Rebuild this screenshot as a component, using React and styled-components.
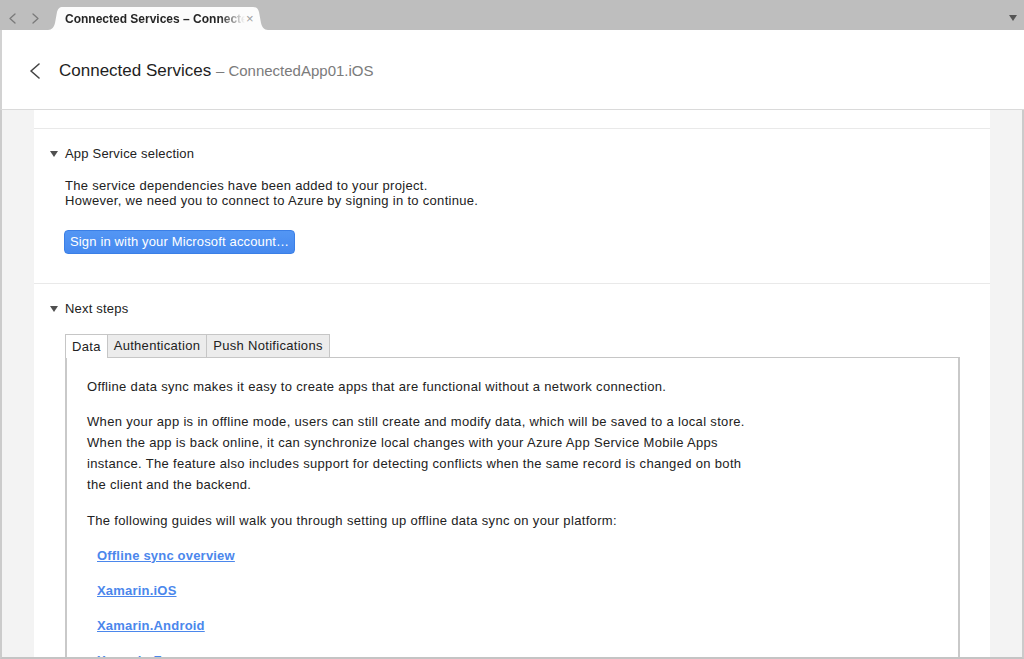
import React from 'react';
import styled, { createGlobalStyle } from 'styled-components';

const Global = createGlobalStyle`
  html, body {
    margin: 0;
    padding: 0;
    overflow: hidden;
    background: #fff;
  }
  body {
    font-family: "Liberation Sans", Arial, sans-serif;
    color: #222;
  }
`;

const Window = styled.div`
  width: 1024px;
  height: 659px;
  display: flex;
  flex-direction: column;
`;

const TabStrip = styled.div`
  height: 30px;
  flex: none;
  background: #bebebe;
  display: flex;
  align-items: flex-end;
  padding-left: 9px;
  position: relative;
`;

const NavArrows = styled.div`
  display: flex;
  gap: 16px;
  align-self: center;
  margin-top: 6px;
  color: #7a7a7a;
`;

const BrowserTab = styled.div`
  position: relative;
  width: 220px;
  height: 23px;
  margin-left: 9px;
  background: #fcfcfc;
  clip-path: path("M0 23 C4 23 6 20 7 16 L9 5 C10 2 11 0 15 0 L205 0 C209 0 210 2 211 5 L213 16 C214 20 216 23 220 23 Z");
  display: flex;
  align-items: center;
  padding-left: 17px;
  box-sizing: border-box;
`;

const TabLabel = styled.span`
  font-size: 12px;
  font-weight: bold;
  color: #262626;
  white-space: nowrap;
  overflow: hidden;
  width: 180px;
  -webkit-mask-image: linear-gradient(to right, #000 86%, transparent 100%);
  mask-image: linear-gradient(to right, #000 86%, transparent 100%);
`;

const TabClose = styled.span`
  position: absolute;
  left: 198px;
  top: 4px;
  font-size: 13px;
  color: #a0a0a0;
`;

const Dropdown = styled.div`
  position: absolute;
  right: 7px;
  top: 15px;
  width: 0;
  height: 0;
  border-left: 4px solid transparent;
  border-right: 4px solid transparent;
  border-top: 6px solid #555;
`;

const Header = styled.div`
  height: 80px;
  flex: none;
  border-bottom: 1px solid #dadada;
  border-left: 2px solid #d2d2d2;
  display: flex;
  align-items: center;
  padding: 3px 0 0 28px;
  box-sizing: border-box;
  gap: 19px;
`;

const Title = styled.h1`
  margin: 0;
  font-size: 17px;
  font-weight: normal;
  color: #1e1e1e;
`;

const Subtitle = styled.span`
  font-size: 15px;
  color: #7b7b7b;
`;

const Body = styled.div`
  flex: 1;
  min-height: 0;
  display: flex;
  background: #f3f3f3;
  border-left: 2px solid #cbcbcb;
  border-right: 2px solid #cbcbcb;
  border-bottom: 2px solid #c4c4c4;
  padding: 0 32px;
  overflow: hidden;
`;

const Panel = styled.div`
  flex: 1;
  background: #fff;
  overflow: hidden;
`;

const Stub = styled.div`
  height: 18px;
  border-bottom: 1px solid #e9e9e9;
`;

const Section = styled.section`
  padding: 17px 0 ${p => (p.$last ? 30 : 29)}px 15px;
  border-bottom: ${p => (p.$last ? 'none' : '1px solid #e9e9e9')};
`;

const SectionHead = styled.div`
  display: flex;
  align-items: center;
  gap: 7px;
  font-size: 13px;
  line-height: 16px;
  letter-spacing: 0.2px;
  color: #222;
`;

const Caret = styled.span`
  width: 0;
  height: 0;
  margin-left: 1px;
  border-left: 4px solid transparent;
  border-right: 4px solid transparent;
  border-top: 6px solid #505050;
`;

const SectionBody = styled.div`
  padding-left: 16px;
  margin-top: ${p => p.$gap || 15}px;
`;

const Lines = styled.p`
  margin: 0;
  font-size: 13px;
  line-height: 15px;
  letter-spacing: 0.3px;
  padding-top: 0.5px;
`;

const SignIn = styled.button`
  margin: 22px 0 0 -1px;
  height: 24px;
  padding: 0 5px;
  border: 1px solid #3b7fe6;
  border-radius: 4px;
  background: linear-gradient(#5396f4, #4689ef);
  color: #fff;
  font-family: inherit;
  font-size: 13px;
  letter-spacing: 0.15px;
  cursor: pointer;
`;

const Tabs = styled.div`
  display: flex;
  margin-top: 17px;
`;

const Tab = styled.div`
  box-sizing: border-box;
  padding: 0 6px;
  display: flex;
  align-items: center;
  font-size: 13px;
  letter-spacing: 0.3px;
  color: #222;
  border: 1px solid #c6c6c6;
  border-bottom: none;
  margin-left: ${p => (p.$first ? 0 : -1)}px;
  background: ${p => (p.$active ? '#fff' : '#ececec')};
  position: relative;
  z-index: ${p => (p.$active ? 1 : 0)};
  margin-bottom: ${p => (p.$active ? -1 : 0)}px;
  height: ${p => (p.$active ? 24 : 23)}px;
`;

const TabPanel = styled.div`
  margin-right: 30px;
  border: 1px solid #c6c6c6;
  border-left: 2px solid #c9c9c9;
  border-right: 2px solid #c9c9c9;
  padding: 18px 20px 0 20px;
`;

const Para = styled.p`
  margin: 0 0 ${p => p.$gap || 14}px;
  font-size: 13px;
  line-height: 21px;
  letter-spacing: 0.33px;
  color: #222;
  white-space: nowrap;
`;

const Guides = styled.div`
  padding-left: 10px;
  display: flex;
  flex-direction: column;
  gap: 14px;
`;

const Guide = styled.a`
  font-size: 13px;
  line-height: 21px;
  font-weight: bold;
  letter-spacing: 0.2px;
  color: #4b87ec;
  text-decoration: underline;
  align-self: flex-start;
`;

const Chevron = ({ dir = 'left', w = 7, h = 12, stroke = 1.3 }) => (
  <svg width={w} height={h} viewBox={`0 0 ${w} ${h}`} fill="none">
    <polyline
      points={dir === 'left' ? `${w - 1},1 1,${h / 2} ${w - 1},${h - 1}` : `1,1 ${w - 1},${h / 2} 1,${h - 1}`}
      stroke="currentColor"
      strokeWidth={stroke}
      strokeLinecap="round"
      strokeLinejoin="round"
    />
  </svg>
);

const BackButton = styled.span`
  display: flex;
  color: #444;
`;

const guides = ['Offline sync overview', 'Xamarin.iOS', 'Xamarin.Android', 'Xamarin.Forms'];

export default function App() {
  return (
    <Window>
      <Global />
      <TabStrip>
        <NavArrows>
          <Chevron dir="left" w={7} h={11} />
          <Chevron dir="right" w={7} h={11} />
        </NavArrows>
        <BrowserTab>
          <TabLabel>Connected Services – ConnectedApp01.iOS</TabLabel>
          <TabClose>×</TabClose>
        </BrowserTab>
        <Dropdown />
      </TabStrip>

      <Header>
        <BackButton>
          <Chevron dir="left" w={10} h={16} stroke={1.6} />
        </BackButton>
        <Title>
          Connected Services <Subtitle>– ConnectedApp01.iOS</Subtitle>
        </Title>
      </Header>

      <Body>
        <Panel>
          <Stub />
          <Section>
            <SectionHead>
              <Caret />
              App Service selection
            </SectionHead>
            <SectionBody>
              <Lines>
                The service dependencies have been added to your project.
                <br />
                However, we need you to connect to Azure by signing in to continue.
              </Lines>
              <SignIn>Sign in with your Microsoft account…</SignIn>
            </SectionBody>
          </Section>

          <Section $last>
            <SectionHead>
              <Caret />
              Next steps
            </SectionHead>
            <SectionBody $gap={0.01}>
              <Tabs>
                <Tab $first $active>Data</Tab>
                <Tab>Authentication</Tab>
                <Tab>Push Notifications</Tab>
              </Tabs>
              <TabPanel>
                <Para>Offline data sync makes it easy to create apps that are functional without a network connection.</Para>
                <Para $gap={15}>
                  When your app is in offline mode, users can still create and modify data, which will be saved to a local store.
                  <br />
                  When the app is back online, it can synchronize local changes with your Azure App Service Mobile Apps
                  <br />
                  instance. The feature also includes support for detecting conflicts when the same record is changed on both
                  <br />
                  the client and the backend.
                </Para>
                <Para>The following guides will walk you through setting up offline data sync on your platform:</Para>
                <Guides>
                  {guides.map(g => (
                    <Guide key={g} href="#">{g}</Guide>
                  ))}
                </Guides>
              </TabPanel>
            </SectionBody>
          </Section>
        </Panel>
      </Body>
    </Window>
  );
}
